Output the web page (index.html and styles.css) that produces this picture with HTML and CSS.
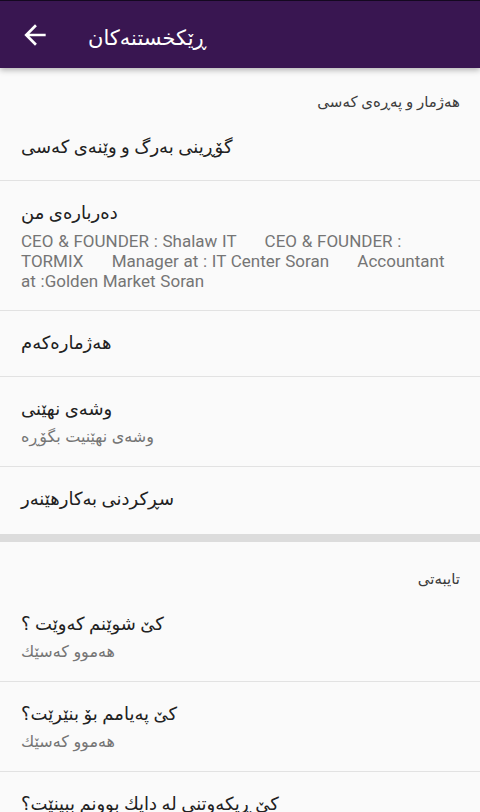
FILE: index.html
```html
<!DOCTYPE html>
<html lang="ckb">
<head>
    <meta charset="UTF-8">
    <meta name="viewport" content="width=device-width, initial-scale=1.0">
    <title>ڕێکخستنەکان</title>
    <link rel="stylesheet" href="styles.css">
</head>
<body>
    <header class="toolbar">
        <button class="back-button" aria-label="Back">
            <svg width="32" height="32" viewBox="0 0 24 24"><path d="M20 11H7.83l5.59-5.59L12 4l-8 8 8 8 1.41-1.41L7.83 13H20v-2z" fill="#fff"/></svg>
        </button>
        <h1 class="toolbar-title" dir="rtl">ڕێکخستنەکان</h1>
    </header>

    <main class="settings">
        <section class="section">
            <div class="category" dir="rtl">هەژمار و پەڕەی کەسی</div>
            <div class="pref">
                <div class="pref-title" dir="rtl">گۆڕینی بەرگ و وێنەی کەسی</div>
            </div>
            <div class="pref">
                <div class="pref-title" dir="rtl">دەربارەی من</div>
                <div class="pref-summary">CEO &amp; FOUNDER : Shalaw IT      CEO &amp; FOUNDER : TORMIX      Manager at : IT Center Soran      Accountant at :Golden Market Soran</div>
            </div>
            <div class="pref">
                <div class="pref-title" dir="rtl">هەژمارەکەم</div>
            </div>
            <div class="pref">
                <div class="pref-title" dir="rtl">وشەی نهێنی</div>
                <div class="pref-summary" dir="rtl">وشەی نهێنیت بگۆڕە</div>
            </div>
            <div class="pref">
                <div class="pref-title" dir="rtl">سڕکردنی بەکارهێنەر</div>
            </div>
        </section>

        <section class="section">
            <div class="category" dir="rtl">تایبەتی</div>
            <div class="pref">
                <div class="pref-title" dir="rtl">کێ شوێنم کەوێت ؟</div>
                <div class="pref-summary" dir="rtl">هەموو کەسێك</div>
            </div>
            <div class="pref">
                <div class="pref-title" dir="rtl">کێ پەیامم بۆ بنێرێت؟</div>
                <div class="pref-summary" dir="rtl">هەموو کەسێك</div>
            </div>
            <div class="pref">
                <div class="pref-title" dir="rtl">کێ ڕیکەوتنی لە دایك بوونم ببینێت؟</div>
                <div class="pref-summary" dir="rtl">هەموو کەسێك</div>
            </div>
        </section>
    </main>
</body>
</html>
```

FILE: styles.css
```css
body {
    margin: 0;
    background-color: #fafafa;
    font-family: Roboto, "DejaVu Sans", sans-serif;
    color: #212121;
}
.toolbar {
    position: relative;
    z-index: 1;
    height: 67px;
    border-top: 1px solid #140820;
    background-color: #391651;
    display: flex;
    align-items: center;
    box-shadow: 0 2px 6px rgba(0, 0, 0, 0.3);
}
.back-button {
    margin-left: 19px;
    padding: 0;
    border: none;
    background: none;
    width: 32px;
    height: 32px;
    display: flex;
}
.toolbar-title {
    margin: 0 0 0 37px;
    font-size: 21px;
    font-weight: normal;
    color: #fff;
    text-align: left;
    line-height: 28px;
    padding-top: 6px;
}
.section {
    padding-bottom: 2px;
}
.section + .section {
    border-top: 8px solid #dcdcdc;
}
.category {
    padding: 24px 20px 3px;
    font-size: 15px;
    line-height: 20px;
    color: #3c3c3c;
    text-align: right;
}
.section + .section .category {
    padding-top: 27px;
}
.pref {
    padding: 18px 26px 19px 21px;
    border-bottom: 1px solid #e2e2e2;
}
.section .pref:last-child {
    border-bottom: none;
}
.pref-title {
    font-size: 18px;
    line-height: 28px;
    color: #212121;
    text-align: left;
}
.pref-summary {
    margin-top: 4px;
    font-size: 17px;
    line-height: 20px;
    word-spacing: 0.5px;
    color: #757575;
    text-align: left;
    white-space: pre-wrap;
}
.pref-summary[dir="rtl"] {
    font-size: 16px;
}
```
